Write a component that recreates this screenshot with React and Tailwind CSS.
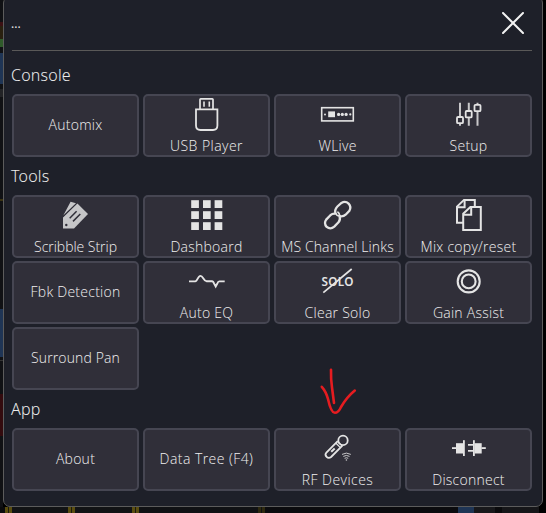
import React from "react";

const INK = "#e4e4e4";

function Icon({ children }) {
  return (
    <svg width="41" height="38" viewBox="0 0 41 38" fill="none" stroke={INK} strokeWidth="1.9" className="block shrink-0 overflow-visible">
      {children}
    </svg>
  );
}

const UsbIcon = () => (
  <Icon>
    <path d="M14 13V3.5Q14 2.8 14.7 2.8H26.3Q27 2.8 27 3.5V13" strokeWidth="1.7" />
    <path d="M10 13.3H31.4V29.5Q31.4 34 27 34H14.4Q10 34 10 29.5Z" strokeWidth="1.8" />
    <path d="M18 5.5V10.7M23.3 5.5V10.7" strokeWidth="1.6" />
  </Icon>
);

const WLiveIcon = () => (
  <Icon>
    <rect x="4.7" y="11.7" width="31.6" height="13.2" strokeWidth="1.6" />
    <g fill={INK} stroke="none">
      <rect x="11.2" y="15.4" width="6.8" height="5.8" />
      <circle cx="8" cy="18.4" r="1" />
      <circle cx="21.6" cy="18.4" r="1.6" />
      <circle cx="25.3" cy="18.4" r="1.6" />
      <circle cx="29.1" cy="18.4" r="1.6" />
      <circle cx="33.3" cy="18.4" r="1.1" />
    </g>
  </Icon>
);

const SetupIcon = () => (
  <Icon>
    <path d="M12 6.7V29.7M20.8 6.7V29.7M29.5 6.7V29.7" stroke="#c8c8ca" strokeWidth="2" />
    <g fill="#302f39" strokeWidth="1.8">
      <rect x="9" y="21" width="6" height="6.2" rx="1" />
      <rect x="17.7" y="15" width="6" height="6.4" rx="1" />
      <rect x="26.5" y="8.8" width="6" height="6.4" rx="1" />
    </g>
  </Icon>
);

const TagIcon = () => (
  <Icon>
    <g fill="#c6c6c8" stroke="none">
      <path d="M8.3 18.6L15.6 4.8L21 6.2Z" />
      <path d="M8 20.5L22.4 6.4L33 17L19 31.4H8Z" />
    </g>
    <path d="M8 19.7L21.8 6.2" stroke="#302f39" strokeWidth="0.9" />
    <path d="M14.7 21.2L21.6 14.3M18 24.4L25.3 17" stroke="#302f39" strokeWidth="1.5" />
    <circle cx="11.3" cy="28" r="1.2" fill="#302f39" stroke="none" />
  </Icon>
);

const DashboardIcon = () => (
  <Icon>
    <g fill={INK} stroke="none">
      {[3.2, 14.2, 25.2].map((y) =>
        [5.2, 17, 28.6].map((x) => <rect key={x + "-" + y} x={x} y={y} width="7.7" height="7.8" />)
      )}
    </g>
  </Icon>
);

const EqIcon = () => (
  <Icon>
    <path d="M3 18.4H9.3Q10.4 18.2 11.4 16.2Q13 12.9 14.5 12.9Q15.7 12.9 17.4 15.6Q19 18.3 20.6 18.3H26.2Q27.3 18.4 28 20.4L29.7 23.5L31.4 20.4Q32 18.4 33.3 18.4H38.7" />
  </Icon>
);

const LinkIcon = () => (
  <Icon>
    <g strokeWidth="2.3">
      <path d="M18.6 17.2Q17.2 12.6 20.4 9.5L24.4 5.9Q28.4 3.6 31.6 6.6Q34.6 9.8 32.4 13.7L28.6 17.7Q26.3 19.9 22.8 19.2" />
      <path d="M22.6 19.4Q23.7 22.8 21.5 25.2L17.3 29.6Q13.4 32.9 9.7 29.9Q6.5 26.2 9.2 22.6L13.4 18.2Q15.8 16 18.8 16.7" />
      <path d="M18.6 15.8Q19.2 18.6 22.9 19.4M20.4 14.8Q22.6 16 22.8 19.8" strokeWidth="1.6" />
    </g>
  </Icon>
);

const SoloIcon = () => (
  <Icon>
    <text x="4.6" y="23" textLength="32" lengthAdjust="spacingAndGlyphs" fill={INK} stroke="none" className="font-['Noto_Sans',sans-serif] text-[12px] font-semibold">SOLO</text>
    <path d="M6.3 29.7L34.7 6" strokeWidth="1.7" />
  </Icon>
);

const CopyIcon = () => (
  <Icon>
    <g strokeWidth="2">
      <path d="M15 25.8H9V9.6L16 2.9H26.8V10" />
      <path d="M9 10.3H16.6V3" />
      <path d="M15.2 33.1V16.7L22.4 9.9H32.8V33.1Z" fill="#302f39" />
      <path d="M15.2 17.8H23.2V10" />
    </g>
  </Icon>
);

const GainIcon = () => (
  <Icon>
    <circle cx="20.7" cy="18.4" r="11" strokeWidth="2.1" />
    <circle cx="20.7" cy="18.4" r="6.9" strokeWidth="2.1" />
  </Icon>
);

const MicIcon = () => (
  <Icon>
    <g strokeWidth="1.8">
      <circle cx="26" cy="10.4" r="4.7" />
      <path d="M20.7 11.2L9.4 22.5Q7.5 24.8 9.6 26.8Q11.6 28.9 14.1 27L25.4 15.7" />
      <path d="M18.8 13L23.4 17.6M20.6 11.3L25.1 15.9" strokeWidth="1.3" />
      <path d="M14.2 21.8L17.7 18.6" strokeWidth="2" />
    </g>
    <g strokeWidth="1" stroke="#c8c8ca">
      <path d="M25 24.4Q29.4 21.8 33.8 24.4M26.3 26.4Q29.4 24.5 32.5 26.4M27.6 28.3Q29.4 27.2 31.2 28.3" />
      <circle cx="29.4" cy="30" r="0.8" fill="#c8c8ca" stroke="none" />
    </g>
  </Icon>
);

const PlugIcon = () => (
  <Icon>
    <g fill={INK} stroke="none">
      <rect x="4" y="17.2" width="4.2" height="1.8" />
      <rect x="8" y="13.2" width="7" height="10.3" />
      <rect x="15" y="10.2" width="1.8" height="15.8" />
      <rect x="20" y="14" width="5" height="1.7" />
      <rect x="20" y="20" width="5" height="1.7" />
      <rect x="25" y="10.2" width="1.8" height="15.8" />
      <rect x="26.5" y="13.2" width="7.2" height="10.3" />
      <rect x="33.5" y="17.2" width="4.3" height="1.8" />
    </g>
  </Icon>
);

const TIGHT = "tracking-[-0.03px]";
const SNUG = "tracking-[0.12px]";
const WIDE = "tracking-[0.45px]";

const SECTIONS = [
  { title: "Console", items: [["Automix"], ["USB Player", UsbIcon, WIDE], ["WLive", WLiveIcon], ["Setup", SetupIcon]] },
  {
    title: "Tools",
    items: [
      ["Scribble Strip", TagIcon, TIGHT], ["Dashboard", DashboardIcon], ["MS Channel Links", LinkIcon, SNUG], ["Mix copy/reset", CopyIcon],
      ["Fbk Detection"], ["Auto EQ", EqIcon], ["Clear Solo", SoloIcon], ["Gain Assist", GainIcon],
      ["Surround Pan", null, SNUG],
    ],
  },
  { title: "App", items: [["About"], ["Data Tree (F4)", null, WIDE], ["RF Devices", MicIcon, WIDE], ["Disconnect", PlugIcon]] },
];

function Tile({ label, Glyph, tracking = "tracking-[0.25px]" }) {
  return (
    <button className={`flex h-[63px] flex-col items-center whitespace-nowrap rounded-[5px] border-2 border-[#464652] bg-[#302f39] font-['Open_Sans','Noto_Sans',sans-serif] text-[14px] font-[350] leading-[19px] text-[#f0f0f0] ${tracking} ${Glyph ? "" : "justify-center pb-[2px]"}`}>
      {Glyph && <Glyph />}
      <span className={Glyph ? "mt-[2px]" : ""}>{label}</span>
    </button>
  );
}

function Strip({ segments, vertical }) {
  return (
    <div className={`flex overflow-hidden ${vertical ? "w-[3px] flex-col" : "h-[6px] w-full"}`}>
      {segments.map(([size, color], i) => (
        <div key={i} className="shrink-0" style={{ [vertical ? "height" : "width"]: size, background: color }} />
      ))}
    </div>
  );
}

const LEFT = [
  [22, "#101114"], [4, "#3b1013"], [13, "#29200f"], [8, "#2f5a2a"], [6, "#101114"], [31, "#1f3555"],
  [5, "#101114"], [8, "#222326"], [102, "#101114"], [2, "#3a3312"], [108, "#101114"], [48, "#1f3555"],
  [3, "#101114"], [1, "#333"], [33, "#101114"], [42, "#330b0e"], [71, "#101114"],
];

const BOTTOM = [
  [5, "#0b0b0d"], [3, "#5a4d10"], [1, "#1c1a10"], [3, "#5a4d10"], [56, "#121315"], [3, "#5a4d10"], [1, "#1c1a10"],
  [3, "#5a4d10"], [57, "#121315"], [3, "#5a4d10"], [1, "#1c1a10"], [3, "#5a4d10"], [119, "#101114"], [3, "#2e290f"],
  [1, "#101114"], [3, "#2e290f"], [193, "#0b0b0e"], [16, "#1f3555"], [21, "#18181b"], [7, "#0a0a0c"], [37, "#161619"], [7, "#000"],
];

export default function App() {
  return (
    <div className="relative flex h-[513px] w-[546px] flex-col overflow-hidden bg-black font-['Noto_Sans',sans-serif] text-[#e4e4e4]">
      <div className="flex h-[507px]">
        <Strip vertical segments={LEFT} />
        <main className="-mt-1 h-[511px] w-[540px] rounded-[7px] border border-[#5c5c5c] bg-[#1e2029] pl-2 pr-[10px] pt-[3px]">
          <header className="flex h-[51px] items-start justify-between border-b border-[#5a5958] pr-2">
            <span className="-ml-px pt-[15px] text-[12px] leading-[18px]">...</span>
            <svg width="22" height="22" viewBox="0 0 22 22" className="mt-3 block" stroke="#f2f2f2" strokeWidth="2" strokeLinecap="round">
              <path d="M1 1L21 21M21 1L1 21" />
            </svg>
          </header>
          <div className="pt-[5px]">
            {SECTIONS.map((section) => (
              <section key={section.title}>
                <h2 className="-ml-px h-[38px] pt-2 text-[16px] font-[350] leading-[22px] tracking-[0.2px] text-[#ececec]">{section.title}</h2>
                <div className="grid grid-cols-[repeat(4,127px)] gap-x-1 gap-y-[3px]">
                  {section.items.map(([label, Glyph, tracking]) => (
                    <Tile key={label} label={label} Glyph={Glyph} tracking={tracking} />
                  ))}
                </div>
              </section>
            ))}
          </div>
        </main>
      </div>
      <Strip segments={BOTTOM} />
      <svg width="40" height="48" viewBox="318 367 40 48" className="absolute left-[318px] top-[367px]" fill="none" stroke="#e51c20" strokeWidth="2.6" strokeLinecap="round" strokeLinejoin="round">
        <path d="M331 369.8Q330.8 380 332 387.5L334 403" />
        <path d="M321.8 386.8Q326 391.5 328 399Q331 412.8 334.8 412.8Q338.5 412.8 341 407Q347 397 354.8 390.6" />
      </svg>
    </div>
  );
}
